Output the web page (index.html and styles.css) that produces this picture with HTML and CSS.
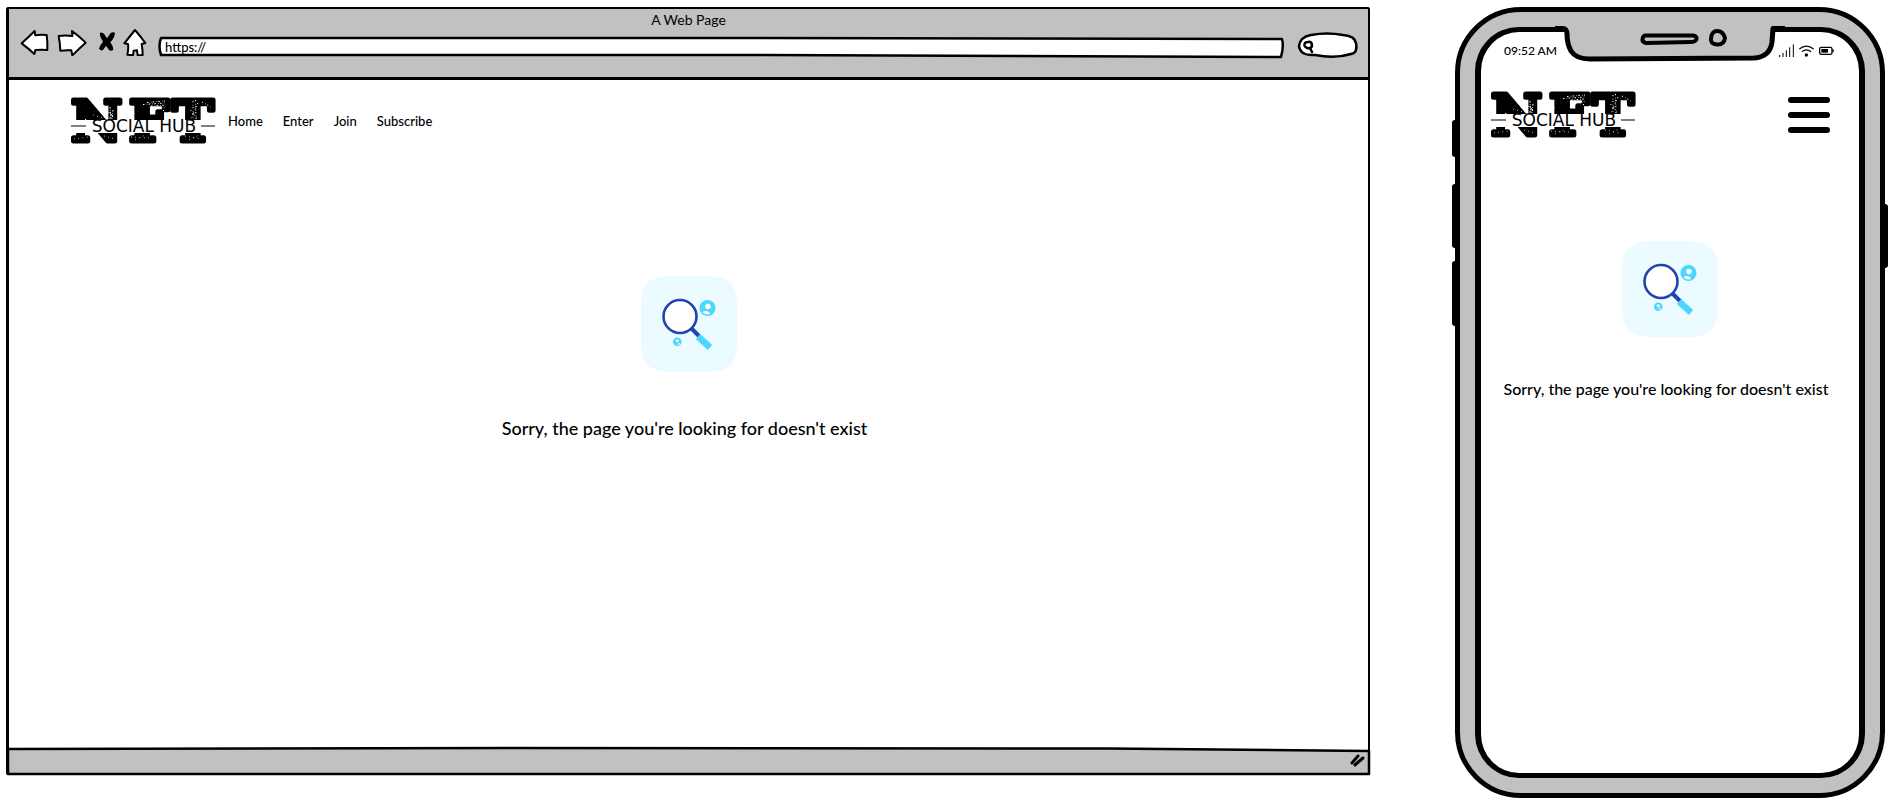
FILE: index.html
```html
<!DOCTYPE html>
<html lang="en">
<head>
<meta charset="utf-8">
<title>NFT Social Hub - page not found</title>
<link rel="stylesheet" href="styles.css">
</head>
<body>
<svg class="sprites" aria-hidden="true">
  <symbol id="not-found" viewBox="0 0 96 96">
    <path fill="#ecfbff" d="M0 28C1 8 8 1 28 0H68C88 1 95 8 96 28V68C95 88 88 95 68 96H28C8 95 1 88 0 68Z"/>
    <path d="M50 52L58 60" stroke="#2143b0" stroke-width="4"/>
    <path d="M57 60.500L69 71.500" stroke="#4cd7ff" stroke-width="6.500"/>
    <circle cx="39" cy="40.500" r="16.500" fill="#fff" stroke="#2143b0" stroke-width="2.600"/>
    <circle cx="66.500" cy="32" r="8" fill="#4cd7ff"/>
    <circle cx="67" cy="30.500" r="2.700" fill="#fff"/>
    <path d="M61.500 36Q64.500 34 68 36L69 38Q64 39.500 61.500 36Z" fill="#fff"/>
    <circle cx="36.300" cy="65.700" r="4.300" fill="#4cd7ff"/>
    <circle cx="36.300" cy="64.800" r="1.500" fill="#fff"/>
    <path d="M36 68.500Q37.500 66.500 39.500 67.500Q38.500 69 36 68.500Z" fill="#fff"/>
  </symbol>
  <symbol id="grain" viewBox="0 0 144 46">
    <g class="grain">
      <path d="M76 4.500L94 3M72 6.500L94 5M80 8L95 7M88 10.500L94 9.500M92 12L95 15" stroke-dasharray="1.500 2.200 .6 1.400"/>
      <path d="M122 3L122 20M124.500 2L125 21M127 5L120 21M119.500 12L126 20M131 4L140 9" stroke-dasharray="1.200 2.600 .7 1.500"/>
      <path d="M39 9L40 21M42 12L41 21M37.500 14L43 20M40.500 16L38 21" stroke-dasharray="1.600 1.600 .7 1.200"/>
      <path d="M60 39L78 40M64 42L74 37M114 38L130 41M118 42L128 37M33 38L44 41M3 41L18 39M22 17L32 20M60 12L66 18" stroke-dasharray=".7 3.600"/>
    </g>
  </symbol>
</svg>

<main class="stage">
  <section class="browser" aria-label="Desktop page">
    <header class="chrome">
      <h1 class="chrome-title">A Web Page</h1>
      <div class="toolbar">
        <button class="tool" type="button" aria-label="Back"><svg width="30" height="28" viewBox="60 84 90 84"><path d="M65 130Q84 113 104 93L106 106Q122 103 140 105Q143 126 142 150Q124 148 106 150L103 162Q84 144 65 130Z"/></svg></button>
        <button class="tool" type="button" aria-label="Forward"><svg width="32" height="28" viewBox="168 84 96 84"><path d="M176 108Q196 105 217 108L216 93Q238 109 257 128Q237 146 217 166L214 151Q198 150 181 152Q180 128 176 108Z"/></svg></button>
        <button class="tool" type="button" aria-label="Stop"><svg width="22" height="28" viewBox="282 84 66 84"><path class="solid" d="M299 99Q306 95 313 103L321 115L332 99Q340 95 345 99Q343 115 331 127Q339 137 340 149Q333 155 327 150L318 137L309 150Q302 154 297 146Q300 134 309 125Q299 112 299 99Z"/></svg></button>
        <button class="tool" type="button" aria-label="Home"><svg width="30" height="28" viewBox="366 84 90 84"><path d="M405 90Q420 107 436 129L425 132Q428 150 428 165L413 166L411 151L401 152L399 166L382 164Q386 148 384 132L373 130Q388 111 405 90Z"/></svg></button>
        <label class="address">
          <svg class="outline" viewBox="0 0 1126 22" preserveAspectRatio="none" aria-hidden="true"><path d="M3 2H600L1123 3Q1125 10 1122 21L600 19H3Q0 10 3 2Z"/></svg>
          <input class="field" type="text" value="https://" aria-label="Address">
        </label>
        <label class="search">
          <svg class="outline" viewBox="0 0 62 26" aria-hidden="true"><path d="M14 3Q30 0 46 3Q58 4 59 11Q61 21 54 22Q38 27 18 23Q3 24 2 14Q3 5 14 3Z"/><path d="M11 10Q15 9 15 14Q14 17 10 16Q6 14 8 11Q9 10 11 10M13 16L15 20"/></svg>
          <input class="field search-field" type="search" aria-label="Search">
        </label>
      </div>
    </header>

    <div class="page">
      <div class="site-header">
        <svg class="logo" width="144" height="46" viewBox="0 0 144 46" role="img" aria-label="NFT Social Hub">
          <g class="logo-big"><text x="0" y="43">N</text><text x="58" y="43">F</text><text x="101" y="43">T</text></g>
          <use href="#grain" width="144" height="46"/>
          <path class="logo-band" d="M-2 22H146V35H-2Z"/>
          <path class="logo-rule" d="M0 28H15M130 28H144"/>
          <text class="logo-small" x="73" y="34">SOCIAL HUB</text>
        </svg>
        <nav class="nav" aria-label="Site">
          <a href="#home">Home</a>
          <a href="#enter">Enter</a>
          <a href="#join">Join</a>
          <a href="#subscribe">Subscribe</a>
        </nav>
      </div>
      <div class="notice">
        <svg class="notice-icon" aria-hidden="true"><use href="#not-found"/></svg>
        <p class="notice-text">Sorry, the page you're looking for doesn't exist</p>
      </div>
    </div>

    <footer class="statusbar">
      <svg class="outline" viewBox="0 0 1360 26" preserveAspectRatio="none" aria-hidden="true"><path class="shade" d="M-1 2L500 1L1100 1.500L1361 4V27H-1Z"/></svg>
      <svg class="grip" width="16" height="14" viewBox="0 0 16 14" aria-hidden="true"><path d="M2 10L8 3M5 12L13 5"/></svg>
    </footer>
  </section>

  <section class="phone" aria-label="Mobile page">
    <i class="key key-mute"></i><i class="key key-up"></i><i class="key key-down"></i><i class="key key-power"></i>
    <svg class="notch" width="230" height="42" viewBox="1555 22 230 42" aria-hidden="true">
      <path class="shade" stroke="none" d="M1564 22H1773V30L1772 42Q1770 57 1754 58L1590 59Q1572 59 1568 44L1567 34Q1567 28 1562 28Z"/>
      <path class="rim" d="M1555 28.500H1562Q1567 28 1567 34Q1567 44 1571 51Q1576 59 1590 59L1754 58Q1770 57 1772 42L1773 28.500H1785"/>
      <path class="rim thin" d="M1645 35.500H1693Q1697 36 1696.500 39Q1696 42 1690 42L1646 43Q1642 42 1642.500 39Q1643 36 1645 35.500Z"/>
      <path class="rim thin" d="M1717 31Q1723 31 1725 38Q1724 45 1717 44.500Q1710 44 1711 38Q1712 31 1717 31Z"/>
    </svg>
    <div class="screen">
      <div class="status">
        <time class="clock">09:52 AM</time>
        <svg width="56" height="14" viewBox="57 38 168 42" aria-label="Signal, wi-fi, battery" role="img">
          <path class="ink" stroke-width="3" d="M59 77V71M69 77V65M79 77V57M89 77V48M100 77V39"/>
          <path class="ink" stroke-width="3.500" d="M118 53Q139 36 161 53M126 61Q139 50 153 61"/>
          <circle cx="139" cy="71" r="5"/>
          <rect class="ink" stroke-width="4" x="179" y="48" width="37" height="21" rx="5"/>
          <rect x="184" y="53" width="20" height="11"/>
          <path class="ink" stroke-width="4" d="M219 54V63"/>
        </svg>
      </div>
      <div class="mobile-header">
        <svg class="logo" width="144" height="46" viewBox="0 0 144 46" role="img" aria-label="NFT Social Hub">
          <g class="logo-big"><text x="0" y="43">N</text><text x="58" y="43">F</text><text x="101" y="43">T</text></g>
          <use href="#grain" width="144" height="46"/>
          <path class="logo-band" d="M-2 22H146V35H-2Z"/>
          <path class="logo-rule" d="M0 28H15M130 28H144"/>
          <text class="logo-small" x="73" y="34">SOCIAL HUB</text>
        </svg>
        <button class="menu" type="button" aria-label="Menu"><span></span><span></span><span></span></button>
      </div>
      <div class="notice notice-mobile">
        <svg class="notice-icon" aria-hidden="true"><use href="#not-found"/></svg>
        <p class="notice-text">Sorry, the page you're looking for doesn't exist</p>
      </div>
    </div>
  </section>
</main>
</body>
</html>
```
FILE: styles.css
```css
* { box-sizing: border-box; }
body {
  margin: 0;
  background: #fff;
  color: #000;
  font-family: Lato, "Open Sans", sans-serif;
  font-size: 13px;
  font-weight: 500;
}
button { border: 0; padding: 0; background: none; color: inherit; }
svg { display: block; flex: none; }
.sprites { position: absolute; width: 0; height: 0; }

.stage {
  display: flex;
  gap: 85px;
  min-height: 100vh;
  padding: 7px 13px 7px 6px;
}

/* Desktop window */
.browser {
  display: flex;
  flex: 1;
  flex-direction: column;
  min-width: 0;
  margin-bottom: 23px;
  border: solid #000;
  border-width: 2px 2px 2px 3px;
  border-radius: 2px;
}
.chrome {
  padding: 2px 9px 19px 11px;
  border-bottom: 3px solid #000;
  background: #c1c1c1;
}
.chrome-title {
  margin: 0;
  padding-right: 2px;
  font-size: 14px;
  font-weight: 400;
  line-height: 18px;
  text-align: center;
}
.toolbar { display: flex; align-items: flex-end; gap: 6px; height: 29px; }
.tool { margin-bottom: 2px; }
.tool path { fill: #fff; stroke: #000; stroke-width: 6; stroke-linejoin: round; }
.tool .solid { fill: #000; stroke: none; }
.outline { position: absolute; inset: 0; width: 100%; height: 100%; overflow: visible; }
.outline path { fill: #fff; stroke: #000; stroke-width: 2.5; stroke-linejoin: round; stroke-linecap: round; vector-effect: non-scaling-stroke; }
.address { position: relative; flex: 1; height: 22px; }
.search { position: relative; width: 62px; height: 26px; margin-left: 6px; }
.field {
  position: relative;
  width: 100%;
  height: 100%;
  padding: 0 7px;
  border: 0;
  background: none;
  font: inherit;
  color: inherit;
  outline: 0;
}
.search-field { padding-left: 20px; }

.page { flex: 1; }
.site-header { display: flex; align-items: center; gap: 13px; padding: 18px 62px 0; }
.nav { display: flex; gap: 20px; }
.nav a { color: inherit; line-height: 16px; text-decoration: none; }

.statusbar { position: relative; display: flex; justify-content: flex-end; align-items: center; height: 26px; padding-right: 2px; }
.statusbar .grip { position: relative; }
.grip path { fill: none; stroke: #000; stroke-width: 3; stroke-linecap: round; }
.outline .shade, .shade { fill: #c1c1c1; }

/* Logo */
.logo { overflow: visible; }
.logo-big text { font: bold 56px "DejaVu Serif", serif; stroke: #000; stroke-width: 5; stroke-linejoin: round; }
.logo-band { fill: #fff; }
.logo-rule { stroke: #000; stroke-width: 1; }
.logo-small { font: 17px "DejaVu Sans", sans-serif; text-anchor: middle; }
.grain { fill: none; stroke: #fff; stroke-width: 1; }

/* Not-found notice */
.notice { display: flex; flex-direction: column; align-items: center; gap: 45px; padding-top: 132px; font-size: 18px; }
.notice-mobile { gap: 41px; padding-top: 103px; font-size: 16px; }
.notice-icon { width: 96px; height: 96px; }
.notice-text { margin: 0; padding-right: 8px; line-height: 22px; }

/* Phone */
.phone {
  position: relative;
  display: flex;
  flex: none;
  width: 430px;
  padding: 15px;
  border: 5px solid #000;
  border-radius: 66px;
  background: #c1c1c1;
}
.screen {
  flex: 1;
  border: solid #000;
  border-width: 5px 6px;
  border-radius: 44px;
  background: #fff;
}
.notch { position: absolute; top: 10px; left: 95px; }
.rim { fill: none; stroke: #000; stroke-width: 5; stroke-linejoin: round; }
.thin { stroke-width: 4; }
.key { position: absolute; left: -8px; width: 6px; border-radius: 3px; background: #000; }
.key-mute { top: 108px; height: 37px; }
.key-up { top: 172px; height: 64px; }
.key-down { top: 249px; height: 65px; }
.key-power { top: 192px; right: -8px; left: auto; width: 8px; height: 64px; }
.status { display: flex; justify-content: space-between; align-items: center; padding: 10px 24px 0 23px; }
.clock { font-size: 12px; line-height: 18px; }
.ink { fill: none; stroke: #000; }
.mobile-header { display: flex; justify-content: space-between; align-items: center; padding: 32px 29px 0 10px; }
.menu { display: flex; flex-direction: column; gap: 9px; width: 42px; }
.menu span { height: 6px; border-radius: 3px; background: #000; }
```
